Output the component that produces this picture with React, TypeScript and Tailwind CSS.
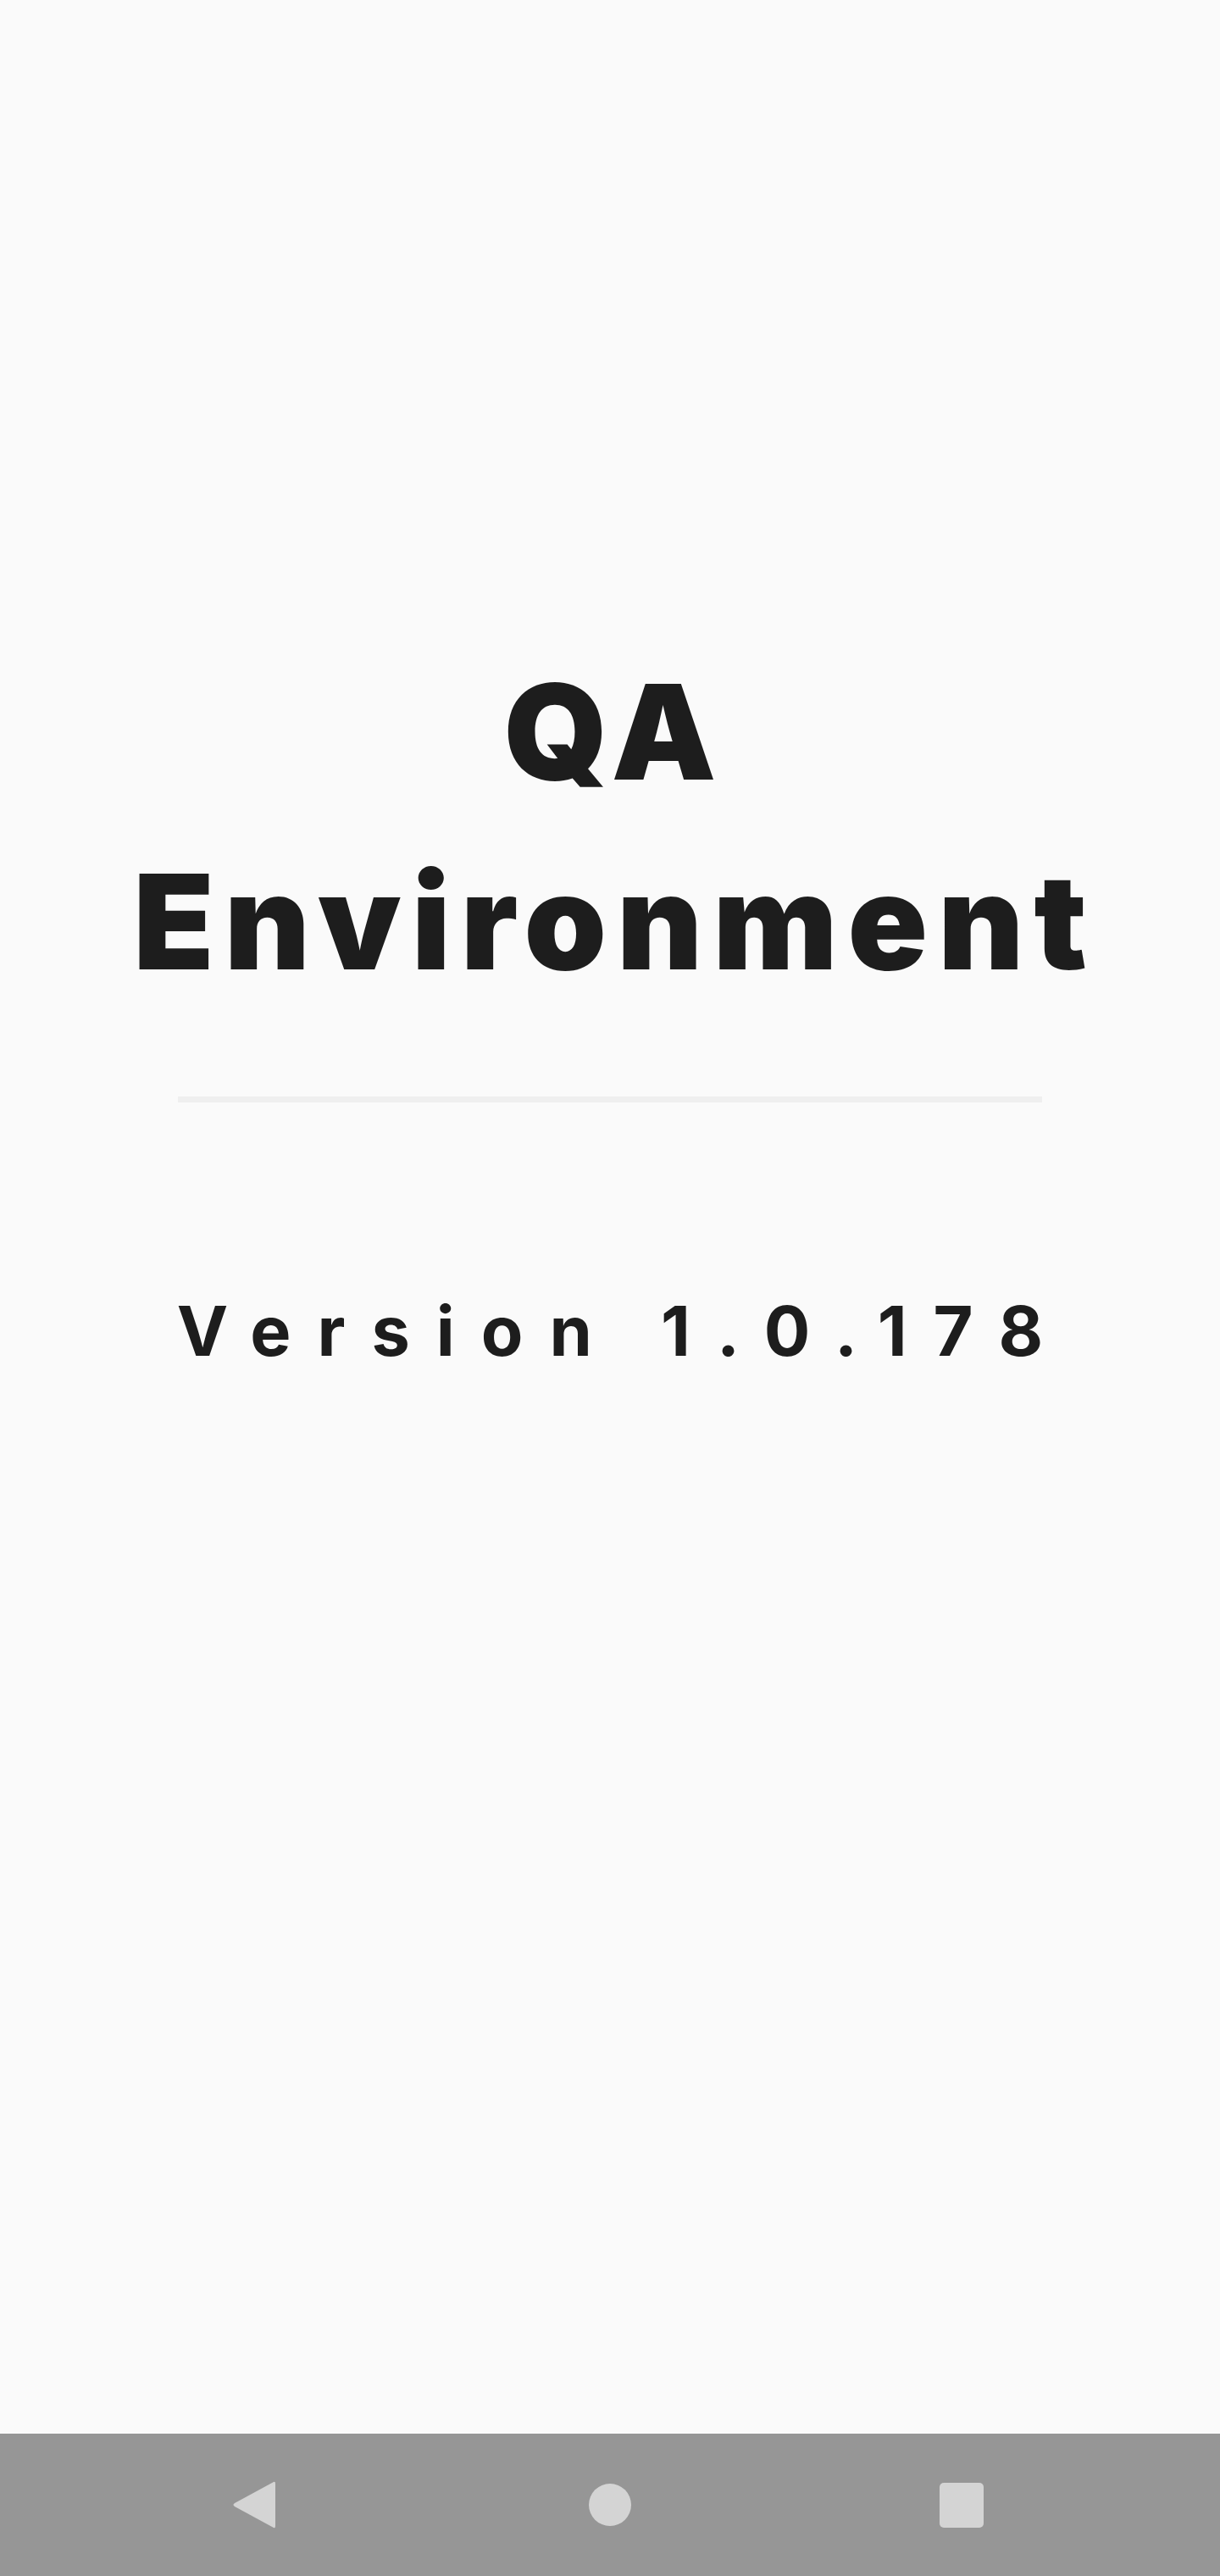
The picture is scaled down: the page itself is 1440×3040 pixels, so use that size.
import React from 'react';

const NavBar: React.FC = () => (
  <div className="h-[168px] bg-[#969696] flex items-center">
    <svg width="52" height="58" viewBox="0 0 52 58" className="ml-[274px]">
      <path d="M49 2 Q51 1 51 4 L51 54 Q51 57 49 56 L3 31 Q0 29 3 27 Z" fill="#d4d4d4" />
    </svg>
    <div className="ml-[369px] w-[50px] h-[50px] rounded-full bg-[#d4d4d4]" />
    <div className="ml-[364px] w-[52px] h-[53px] rounded-[5px] bg-[#d4d4d4]" />
  </div>
);

const App: React.FC = () => {
  return (
    <div className="w-[1440px] h-[3040px] bg-[#fafafa] flex flex-col" style={{ fontFamily: 'Inter, "DejaVu Sans", sans-serif' }}>
      <div className="flex-1 flex flex-col">
        <h1 className="pt-[752px] pl-[12px] text-center text-[156px] leading-[224px] font-black text-[#1d1d1d] tracking-[12px]">
          QA
          <br />
          Environment
        </h1>
        <div className="mt-[94px] mx-auto w-[1020px] h-[7px] bg-[#efefef]" />
        <p className="mt-[220px] pl-[31px] text-center text-[81px] leading-[100px] font-bold text-[#1d1d1d] tracking-[31px]">
          Version 1.0.178
        </p>
      </div>
      <NavBar />
    </div>
  );
};

export default App;
